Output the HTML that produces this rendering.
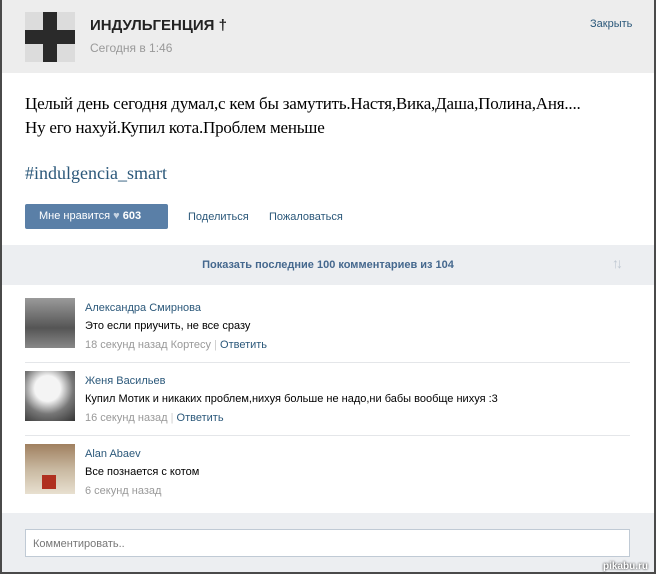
<!DOCTYPE html>
<html><head><meta charset="utf-8"><style>
*{margin:0;padding:0;box-sizing:border-box}
body{width:656px;height:574px;overflow:hidden;background:#fff;font-family:"Liberation Sans","Noto Sans CJK SC",sans-serif;position:relative}
.frame{position:absolute;left:0;top:0;width:656px;height:574px;border-left:2px solid #4a4a4a;border-right:2px solid #4a4a4a;border-bottom:2px solid #4a4a4a}
.a{position:absolute}
.hdr{left:2px;top:0;width:652px;height:73px;background:#ededed}
.gray{background:#eceef1}
.ser{font-family:"Liberation Serif",serif}
.blue{color:#2b587a}
.time{color:#999;font-size:11px}
.sep{position:absolute;left:25px;width:605px;height:1px;background:#e4e6e9}
</style></head><body>
<div class="a hdr"></div>
<div class="a" style="left:25px;top:12px;width:50px;height:50px;background:#dcdcdc"></div>
<div class="a" style="left:43px;top:12px;width:14px;height:50px;background:#2a2a2a"></div>
<div class="a" style="left:25px;top:30px;width:50px;height:14px;background:#2a2a2a"></div>
<div class="a" style="left:90px;top:17px;font-size:15px;font-weight:bold;color:#222">ИНДУЛЬГЕНЦИЯ †</div>
<div class="a" style="left:90px;top:41px;font-size:12px;color:#999">Сегодня в 1:46</div>
<div class="a blue" style="left:590px;top:18px;font-size:11px">Закрыть</div>
<div class="a ser" style="left:25px;top:92px;font-size:17px;line-height:24px;color:#000;letter-spacing:-0.2px">Целый день сегодня думал,с кем бы замутить.Настя,Вика,Даша,Полина,Аня....<br>Ну его нахуй.Купил кота.Проблем меньше</div>
<div class="a ser" style="left:25px;top:163px;font-size:18px;color:#2b587a">#indulgencia_smart</div>
<div class="a" style="left:25px;top:204px;width:143px;height:25px;background:#5a7fa7;border-radius:2px;color:#fff;font-size:11px;line-height:25px;padding-left:14px">Мне нравится <span style="color:#c5d3e2">♥</span> <b>603</b></div>
<div class="a blue" style="left:188px;top:211px;font-size:11px">Поделиться</div>
<div class="a blue" style="left:269px;top:211px;font-size:11px">Пожаловаться</div>
<div class="a gray" style="left:2px;top:245px;width:652px;height:40px"></div>
<div class="a" style="left:0;width:656px;top:259px;text-align:center;font-size:11px;font-weight:bold;color:#45688e">Показать последние 100 комментариев из 104</div>
<div class="a" style="left:612px;top:255px;font-size:14px;font-weight:bold;color:#c0c8d2;letter-spacing:-3px">↑↓</div>

<div class="a" style="left:25px;top:298px;width:50px;height:50px;background:linear-gradient(#9a9a9a,#555 60%,#888)"></div>
<div class="a blue" style="left:85px;top:302px;font-size:11px">Александра Смирнова</div>
<div class="a" style="left:85px;top:320px;font-size:11px;color:#000">Это если приучить, не все сразу</div>
<div class="a time" style="left:85px;top:339px">18 секунд назад Кортесу <span style="color:#ccc">|</span> <span class="blue">Ответить</span></div>
<div class="sep" style="top:362px"></div>
<div class="a" style="left:25px;top:371px;width:50px;height:50px;background:radial-gradient(circle at 45% 35%,#f4f4f4 30%,#777 60%,#333)"></div>
<div class="a blue" style="left:85px;top:375px;font-size:11px">Женя Васильев</div>
<div class="a" style="left:85px;top:393px;font-size:11px;color:#000">Купил Мотик и никаких проблем,нихуя больше не надо,ни бабы вообще нихуя :3</div>
<div class="a time" style="left:85px;top:412px">16 секунд назад <span style="color:#ccc">|</span> <span class="blue">Ответить</span></div>
<div class="sep" style="top:435px"></div>
<div class="a" style="left:25px;top:444px;width:50px;height:50px;background:linear-gradient(#a08060,#c8b8a0 50%,#e8e0d0)"></div>
<div class="a" style="left:42px;top:475px;width:14px;height:14px;background:#b03020"></div>
<div class="a blue" style="left:85px;top:448px;font-size:11px">Alan Abaev</div>
<div class="a" style="left:85px;top:466px;font-size:11px;color:#000">Все познается с котом</div>
<div class="a time" style="left:85px;top:485px">6 секунд назад</div>

<div class="a gray" style="left:2px;top:513px;width:652px;height:61px"></div>
<div class="a" style="left:25px;top:529px;width:605px;height:28px;background:#fff;border:1px solid #c0cad5;font-size:11px;color:#777;padding:8px 7px">Комментировать..</div>
<div class="a" style="left:603px;top:561px;font-size:10px;color:#fff;font-weight:bold;text-shadow:0 0 2px #000">pikabu.ru</div>
<div class="frame"></div>
</body></html>
